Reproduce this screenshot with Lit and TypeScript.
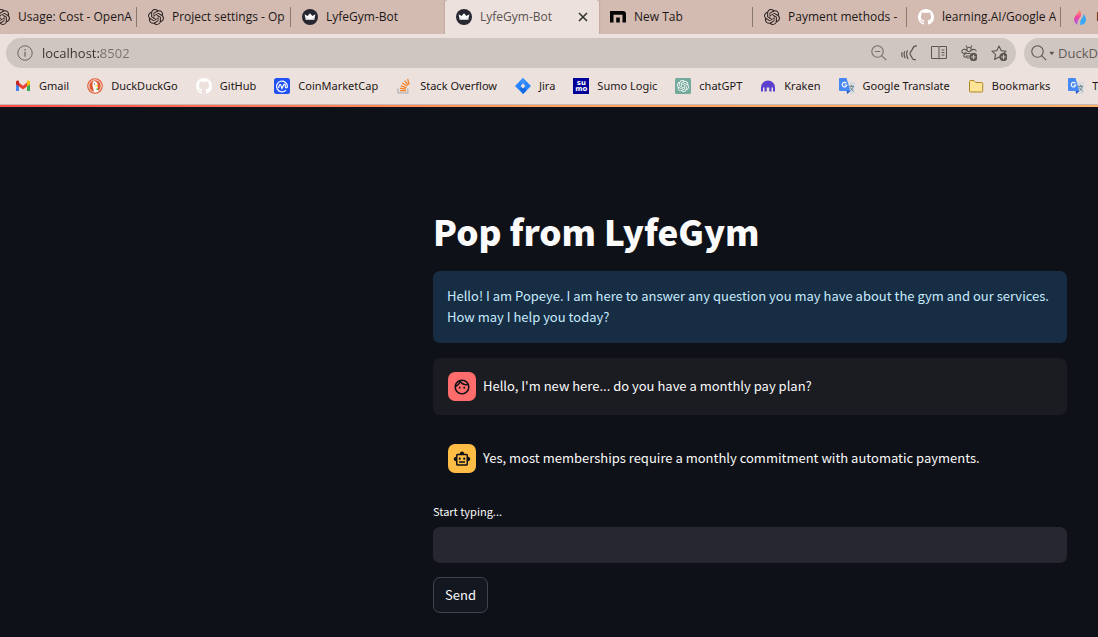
import { LitElement, html, svg, css } from "lit";
import { customElement, property, state } from "lit/decorators.js";

const OPENAI =
  "M22.2819 9.8211a5.9847 5.9847 0 0 0-.5157-4.9108 6.0462 6.0462 0 0 0-6.5098-2.9A6.0651 6.0651 0 0 0 4.9807 4.1818a5.9847 5.9847 0 0 0-3.9977 2.9 6.0462 6.0462 0 0 0 .7427 7.0966 5.98 5.98 0 0 0 .511 4.9107 6.051 6.051 0 0 0 6.5146 2.9001A5.9847 5.9847 0 0 0 13.2599 24a6.0557 6.0557 0 0 0 5.7718-4.2058 5.9894 5.9894 0 0 0 3.9977-2.9001 6.0557 6.0557 0 0 0-.7475-7.0729zm-9.022 12.6081a4.4755 4.4755 0 0 1-2.8764-1.0408l.1419-.0804 4.7783-2.7582a.7948.7948 0 0 0 .3927-.6813v-6.7369l2.02 1.1686a.071.071 0 0 1 .038.052v5.5826a4.504 4.504 0 0 1-4.4945 4.4944zm-9.6607-4.1254a4.4708 4.4708 0 0 1-.5346-3.0137l.142.0852 4.783 2.7582a.7712.7712 0 0 0 .7806 0l5.8428-3.3685v2.3324a.0804.0804 0 0 1-.0332.0615L9.74 19.9502a4.4992 4.4992 0 0 1-6.1408-1.6464zM2.3408 7.8956a4.485 4.485 0 0 1 2.3655-1.9728V11.6a.7664.7664 0 0 0 .3879.6765l5.8144 3.3543-2.0201 1.1685a.0757.0757 0 0 1-.071 0l-4.8303-2.7865A4.504 4.504 0 0 1 2.3408 7.872zm16.5963 3.8558L13.1038 8.364 15.1192 7.2a.0757.0757 0 0 1 .071 0l4.8303 2.7913a4.4944 4.4944 0 0 1-.6765 8.1042v-5.6772a.79.79 0 0 0-.407-.667zm2.0107-3.0231l-.142-.0852-4.7735-2.7818a.7759.7759 0 0 0-.7854 0L9.409 9.2297V6.8974a.0662.0662 0 0 1 .0284-.0615l4.8303-2.7866a4.4992 4.4992 0 0 1 6.6802 4.66zM8.3065 12.863l-2.02-1.1638a.0804.0804 0 0 1-.038-.0567V6.0742a4.4992 4.4992 0 0 1 7.3757-3.4537l-.142.0805L8.704 5.459a.7948.7948 0 0 0-.3927.6813zm1.0976-2.3654l2.602-1.4998 2.6069 1.4998v2.9994l-2.5974 1.4997-2.6067-1.4997Z";
const OCTOCAT =
  "M8 0C3.58 0 0 3.58 0 8c0 3.54 2.29 6.53 5.47 7.59.4.07.55-.17.55-.38 0-.19-.01-.82-.01-1.49-2.01.37-2.53-.49-2.69-.94-.09-.23-.48-.94-.82-1.13-.28-.15-.68-.52-.01-.53.63-.01 1.08.58 1.23.82.72 1.21 1.87.87 2.33.66.07-.52.28-.87.51-1.07-1.78-.2-3.64-.89-3.64-3.95 0-.87.31-1.59.82-2.15-.08-.2-.36-1.02.08-2.12 0 0 .67-.21 2.2.82.64-.18 1.32-.27 2-.27s1.36.09 2 .27c1.53-1.04 2.2-.82 2.2-.82.44 1.1.16 1.92.08 2.12.51.56.82 1.27.82 2.15 0 3.07-1.87 3.75-3.65 3.95.29.25.54.73.54 1.48 0 1.07-.01 1.93-.01 2.2 0 .21.15.46.55.38A8.01 8.01 0 0 0 16 8c0-4.42-3.58-8-8-8z";
const FACE =
  "M10.25 13c0 .69-.56 1.25-1.25 1.25S7.75 13.69 7.75 13s.56-1.25 1.25-1.25 1.25.56 1.25 1.25zM15 11.75c-.69 0-1.25.56-1.25 1.25s.56 1.25 1.25 1.25 1.25-.56 1.25-1.25-.56-1.25-1.25-1.25zm7 .25c0 5.52-4.48 10-10 10S2 17.52 2 12 6.48 2 12 2s10 4.48 10 10zM10.66 4.12C12.06 6.44 14.6 8 17.5 8c.46 0 .91-.05 1.34-.12C17.44 5.56 14.9 4 12 4c-.46 0-.91.05-1.34.12zM4.42 9.47c1.71-.97 3.03-2.55 3.66-4.44C6.37 6 5.05 7.58 4.42 9.47zM20 12c0-.78-.12-1.53-.33-2.24-.7.15-1.42.24-2.17.24-3.13 0-5.92-1.44-7.76-3.69C8.69 8.87 6.6 10.88 4 11.86c.01.04 0 .09 0 .14 0 4.42 3.58 8 8 8s8-3.58 8-8z";
const ROBOT =
  "M20 9V7c0-1.1-.9-2-2-2h-3c0-1.66-1.34-3-3-3S9 3.34 9 5H6c-1.1 0-2 .9-2 2v2c-1.66 0-3 1.34-3 3s1.34 3 3 3v4c0 1.1.9 2 2 2h12c1.1 0 2-.9 2-2v-4c1.66 0 3-1.34 3-3s-1.34-3-3-3zm-2 10H6V7h12v12zm-9-6c-.83 0-1.5-.67-1.5-1.5S8.17 10 9 10s1.5.67 1.5 1.5S9.83 13 9 13zm7.5-1.5c0 .83-.67 1.5-1.5 1.5s-1.5-.67-1.5-1.5.67-1.5 1.5-1.5 1.5.67 1.5 1.5zM8 15h8v2H8v-2z";

const plusBadge = svg`<circle cx="12.5" cy="12" r="4.2" fill="#5b5653"/><path d="M12.5 9.8v4.4M10.3 12h4.4" stroke="#d0c6c1" stroke-width="1.1"/>`;

// Glyph bodies, all drawn on a 16 × 16 canvas.
const glyphs: Record<string, unknown> = {
  openai: svg`<path transform="scale(.6667)" fill="#2b2322" d=${OPENAI}/>`,
  github: svg`<path fill="#fff" d=${OCTOCAT}/>`,
  crown: svg`<circle cx="8" cy="8" r="8" fill="#262730"/><path d="M2.6 5.2 5.6 7 8 4.2 10.4 7l3-1.8-1.3 5.9H3.9z" fill="#fff"/><path d="M3.9 11.1 3.4 8.9 8 10l4.6-1.1-.5 2.2z" fill="#c9cacc"/>`,
  maxthon: svg`<path d="M0 2h13a3 3 0 0 1 3 3v8.500h-3.500V5.800H3.500v7.700H0z" fill="#050505"/><path d="M6.200 8.500h3.600v5H6.200z" fill="#050505"/>`,
  flame: svg`<defs><linearGradient id="fl" x1="0" y1="0" x2="0" y2="1"><stop offset="0" stop-color="#ffa15c"/><stop offset=".5" stop-color="#f4459c"/><stop offset="1" stop-color="#9b5cf6"/></linearGradient></defs><path d="M7 .5c.6 3.500-4.900 5.500-4.900 10 0 2.500 1.600 4.500 3.600 5.200C4.500 12 7.500 10 8.800 7 9.800 4.500 8.800 2 7 .5z" fill="url(#fl)"/><path d="M11.500 5c.2 4-4.500 5.500-3 10.900C12 16 14 13.500 14 10.500c0-2-1.200-4-2.500-5.500z" fill="#38a9f5"/>`,
  gmail: svg`<path d="M1 3.500 1 13h3V7z" fill="#4285f4"/><path d="M15 3.500V13h-3V7z" fill="#34a853"/><path d="m4 4.500 4 3.200 4-3.200v4L8 11.600 4 8.500z" fill="#ea4335"/><path d="M1 4.200C1 2.500 2.900 2 4 3v5.500L1 6.200z" fill="#c5221f"/><path d="M15 4.200c0-1.700-1.900-2.200-3-1.200v5.500l3-2.300z" fill="#fbbc04"/>`,
  duck: svg`<circle cx="8" cy="8" r="7.800" fill="#de5833"/><circle cx="8" cy="8" r="6.200" fill="none" stroke="#fff" stroke-width=".9"/><path d="M6 3.500c2.500-.8 4.600.8 4.600 3.700 0 2 .2 4.400.8 6.200-2 .9-3.500.7-4.400.4C6.500 11 5.600 8.500 5.400 6.500z" fill="#fff"/><path d="M8.200 7.200c1.500-.2 3 .1 3 .6s-1.500.9-2.900.8z" fill="#fdd20a"/><path d="m8.500 11 2.500-1v2.500z" fill="#65bc46"/><circle cx="7.400" cy="5.900" r=".6" fill="#2d4f8e"/>`,
  coin: svg`<rect width="16" height="16" rx="2.500" fill="#1f51f5"/><path d="M12 12.100A5.400 5.400 0 1 1 13.400 8.500c0 1.800-2.100 1.800-2.100 0 0-3.500-1.500-2.700-2.100-.8L8 10.400 7 7.500C6.500 5.800 5.700 6 5.300 7.500l-.8 2.600" fill="none" stroke="#fff" stroke-width="1.200"/>`,
  stack: svg`<path d="M2 10.500v4.300h9.800v-4.300" fill="none" stroke="#b3b4b8" stroke-width="1.300"/><path d="M4 12.600h6M4.100 10.400l5.900.7M4.700 7.900l5.700 1.700M6.200 5l5 3.100M8.600 2.600l3.600 4.600M11.600 1l1.600 5.500" stroke="#f48024" stroke-width="1.200"/>`,
  jira: svg`<path d="m8 0 8 8-8 8-8-8z" fill="#2684ff"/><path d="M8 0 4.500 3.500 8 8l3-3z" fill="#3b8fff"/><path d="m8 16 3.500-3.500L8 8 5 11z" fill="#1668e0"/><path d="m8 5.600 2.400 2.400L8 10.400 5.600 8z" fill="#ede1dd"/>`,
  gpt: svg`<rect width="16" height="16" rx="1.500" fill="#74aa9c"/><path transform="translate(2 2) scale(.5)" fill="#fff" d=${OPENAI}/>`,
  kraken: svg`<path d="M1 13.500V9.500a7 7 0 0 1 14 0v4h-2v-4h-1.500v4h-2.200v-4H6.700v4H4.500v-4H3v4z" fill="#5b3fce"/>`,
  translate: svg`<path d="M7 4h8a1 1 0 0 1 1 1v10a1 1 0 0 1-1 1H9z" fill="#d7dbdf"/><path d="M1 0h6.500l3.800 13H1a1 1 0 0 1-1-1V1a1 1 0 0 1 1-1z" fill="#4688f4"/><path d="M11.300 13 8.200 16 7.500 13z" fill="#2a56c6"/><path d="M7.400 5.300A2.300 2.300 0 1 0 7.800 7H5.600" fill="none" stroke="#fff" stroke-width="1.100"/><path d="M10.200 8.300h4.800M12.600 7v1.300M14.200 8.300c-.4 2-1.500 3.500-2.700 4.500M11.200 9.500c.8 1.700 2 2.800 3.500 3.600" fill="none" stroke="#607988" stroke-width=".9"/>`,
  folder: svg`<path d="M1.500 3.500a1 1 0 0 1 1-1h3.300l1.900 2h6a1 1 0 0 1 1 1V13a1 1 0 0 1-1 1H2.500a1 1 0 0 1-1-1z" fill="#ffe497" stroke="#ad8523"/>`,
  info: svg`<circle cx="8" cy="8" r="7.200" fill="none" stroke="#6b6562"/><path d="M8 6.800v5M8 4v1.400" stroke="#6b6562" stroke-width="1.200"/>`,
  zoomOut: svg`<g fill="none" stroke="#77706c" stroke-width="1.100"><circle cx="6.500" cy="6.500" r="5.700"/><path d="m10.600 10.600 4.600 4.600M3.800 6.500h5.400"/></g>`,
  cast: svg`<g fill="none" stroke="#5b5653" stroke-width="1.200"><path d="M16 1c-2.500-.3-3.800.8-4.500 3-.5 1.800-2.500 2.600-2.500 4.500s1.300 2.300 1.800 3.800c.5 1.700 1.700 2.700 4.200 2.200M6.500 5.200c-1.200 2.600-1 6 .6 8.800M3.800 6.200c-1 2-.8 4.600.4 7M1.200 7.200c-.6 1.600-.5 3.400.3 5"/></g>`,
  book: svg`<g fill="none" stroke="#5b5653"><path d="M.5 1.500h7l.5.700.500-.7h7v12h-7l-.500.700-.500-.7h-7zM8 2v12M10.500 5h3M10.500 7.500h3M10.500 10h3"/></g>`,
  bee: svg`<g fill="none" stroke="#5b5653" stroke-width="1.100"><circle cx="8" cy="4.500" r="2.200"/><path d="m6 2.500-1-2M10 2.500l1-2M6 5.500C3 3.500.8 4.500.8 6.500S3.500 9 5.500 7.500M10 5.500c3-2 5.200-1 5.200 1M5 8.500c-2 .5-2.500 2-2 3s2 1 3 0M5.500 8.500h4M5 11h3M6 13h2"/></g>${plusBadge}`,
  star: svg`<path d="m8 1 2.100 4.600 5 .6-3.700 3.400 1 5L8 12.100l-4.400 2.500 1-5L.9 6.200l5-.6z" fill="none" stroke="#5b5653" stroke-width="1.100" stroke-linejoin="round"/>${plusBadge}`,
  search: svg`<g fill="none" stroke="#5b5653" stroke-width="1.100"><circle cx="6.500" cy="6.500" r="5.700"/><path d="m10.600 10.600 4.600 4.600"/></g>`,
  caret: svg`<path d="M4 5h9l-4.500 6z" fill="#5b5653"/>`,
  close: svg`<path d="m4 4 8 8M12 4l-8 8" stroke="#333" stroke-width="1.600"/>`,
  face: svg`<path transform="scale(.6667)" fill="#0e1117" d=${FACE}/>`,
  robot: svg`<path transform="scale(.6667)" fill="#0e1117" d=${ROBOT}/>`,
};

@customElement("ui-glyph")
class UiGlyph extends LitElement {
  @property() name = "";
  @property({ type: Number }) size = 16;
  static styles = css`
    :host { display: inline-flex; flex: none; }
    .sumo {
      display: grid; align-content: center; justify-items: center;
      width: 16px; height: 16px; background: #000099; color: #fff;
      font: 700 7px/6px "DejaVu Sans", sans-serif;
    }
  `;
  render() {
    if (this.name === "sumo") {
      return html`<span class="sumo" aria-hidden="true"><span>su</span><span>mo</span></span>`;
    }
    return html`<svg width=${this.size} height=${this.size} viewBox="0 0 16 16" aria-hidden="true">${glyphs[this.name]}</svg>`;
  }
}

@customElement("browser-chrome")
class BrowserChrome extends LitElement {
  tabs = [
    ["openai", "Usage: Cost - OpenA"],
    ["openai", "Project settings - Op"],
    ["crown", "LyfeGym-Bot"],
    ["crown", "LyfeGym-Bot"],
    ["maxthon", "New Tab"],
    ["openai", "Payment methods -"],
    ["github", "learning.AI/Google A"],
    ["flame", "I"],
  ];
  active = 3;
  bookmarks = [
    ["gmail", "Gmail"],
    ["duck", "DuckDuckGo"],
    ["github", "GitHub"],
    ["coin", "CoinMarketCap"],
    ["stack", "Stack Overflow"],
    ["jira", "Jira"],
    ["sumo", "Sumo Logic"],
    ["gpt", "chatGPT"],
    ["kraken", "Kraken"],
    ["translate", "Google Translate"],
    ["folder", "Bookmarks"],
    ["translate", "Translate"],
  ];

  static styles = css`
    :host {
      display: block; overflow: hidden; background: #ede1dd; color: #1c1817;
      font: 12px/16px "Open Sans", "Noto Sans", sans-serif;
    }
    button, input { font: inherit; color: inherit; border: 0; padding: 0; margin: 0; background: none; }
    input { outline: 0; min-width: 0; }
    .tabs { display: flex; height: 34px; background: #d4bbb1; overflow: hidden; }
    .tab {
      display: flex; align-items: center; box-sizing: border-box;
      flex: 0 0 154px; min-width: 0; padding: 0 3px 0 11px; position: relative;
    }
    .tab:first-child { margin-left: -17px; }
    .pick { display: flex; align-items: center; gap: 8px; flex: 1; min-width: 0; height: 34px; }
    .name { overflow: hidden; white-space: nowrap; }
    .split::after {
      content: ""; position: absolute; right: 0; top: 7px; bottom: 7px;
      width: 1px; background: #8b7a74;
    }
    .active {
      background: #ede1dd; color: #5a5350; border-radius: 3px 3px 0 0;
      box-shadow: 0 0 2px #9b8780; padding-right: 8px;
    }
    .close { display: flex; }
    .bar { display: flex; gap: 8px; padding: 4px 0 4px 6px; }
    .field { display: flex; align-items: center; height: 30px; background: #d0c6c1; }
    .address { flex: 1; border-radius: 15px; padding: 0 9px 0 11px; gap: 9px; min-width: 0; }
    .url {
      flex: 1; font-size: 13px; color: transparent;
      background: linear-gradient(90deg, #38322f 59px, #77706c 59px);
      background-clip: text; -webkit-background-clip: text;
    }
    .tools { display: flex; gap: 14px; }
    .tools button { display: flex; }
    .search { flex: 0 0 74px; box-sizing: border-box; border-radius: 15px 0 0 15px; padding-left: 7px; overflow: hidden; }
    .engine { display: flex; align-items: center; }
    .query { width: 120px; flex: none; font-size: 13px; padding-left: 2px; }
    .query::placeholder { color: #625c59; opacity: 1; }
    .marks {
      display: flex; align-items: center; gap: 18px; height: 28px; padding: 0 0 4px 15px; overflow: hidden;
      font-family: "Noto Sans", "Open Sans", sans-serif; font-size: 11px;
    }
    .mark { display: flex; align-items: center; gap: 8px; color: inherit; text-decoration: none; white-space: nowrap; }
    .rule { height: 3px; background: linear-gradient(90deg, #ff4b4b, #ffa05c 50%, #ffb168); border-top: 1px solid #c9bcb8; box-sizing: border-box; }
  `;

  render() {
    return html`
      <div class="tabs">
        ${this.tabs.map(([icon, name], i) => {
          const on = i === this.active;
          const split = !on && i !== this.active - 1 && i < 7;
          return html`<div class="tab ${on ? "active" : ""} ${split ? "split" : ""}">
            <button class="pick"><ui-glyph name=${icon}></ui-glyph><span class="name">${name}</span></button>
            ${on ? html`<button class="close" aria-label="Close tab"><ui-glyph name="close"></ui-glyph></button>` : ""}
          </div>`;
        })}
      </div>
      <div class="bar">
        <div class="field address">
          <ui-glyph name="info"></ui-glyph>
          <input class="url" aria-label="Address" .value=${"localhost:8502"} spellcheck="false" />
          <div class="tools">
            ${[["zoomOut", "Zoom out"], ["cast", "Sniffer"], ["book", "Reader"], ["bee", "Add extension"], ["star", "Add bookmark"]].map(
              ([icon, label]) => html`<button aria-label=${label}><ui-glyph name=${icon}></ui-glyph></button>`,
            )}
          </div>
        </div>
        <div class="field search">
          <button class="engine" aria-label="Search engine">
            <ui-glyph name="search"></ui-glyph><ui-glyph name="caret" size="9"></ui-glyph>
          </button>
          <input class="query" aria-label="Search" placeholder="DuckDuckGo" />
        </div>
      </div>
      <nav class="marks">
        ${this.bookmarks.map(
          ([icon, name]) => html`<a class="mark" href="#"><ui-glyph name=${icon}></ui-glyph>${name}</a>`,
        )}
      </nav>
      <div class="rule"></div>
    `;
  }
}

@customElement("chat-message")
class ChatMessage extends LitElement {
  @property() from: "user" | "bot" = "user";
  static styles = css`
    .row { display: flex; align-items: center; gap: 7px; box-sizing: border-box; min-height: 57px; padding: 14px 15px; border-radius: 7px; }
    .row.user { background: #1a1c22; }
    .avatar { display: grid; place-items: center; flex: none; width: 28px; height: 29px; border-radius: 7px; }
    .user .avatar { background: #ff6c6c; }
    .bot .avatar { background: #ffbd45; }
    .text { margin: 0; padding-bottom: 2px; }
  `;
  render() {
    return html`<div class="row ${this.from}">
      <span class="avatar"><ui-glyph name=${this.from === "user" ? "face" : "robot"} size="18"></ui-glyph></span>
      <p class="text"><slot></slot></p>
    </div>`;
  }
}

@customElement("app-root")
class AppRoot extends LitElement {
  @state() draft = "";
  static styles = css`
    :host {
      display: flex; flex-direction: column; min-height: 100vh; background: #0e1117; color: #fafafa;
      font: 13px/21px "Noto Sans CJK SC", "Noto Sans", sans-serif;
    }
    .page { flex: 1; padding: 100px 31px 24px; }
    .column { display: flex; flex-direction: column; gap: 15px; max-width: 634px; margin-left: auto; }
    .title { margin: 0; padding-bottom: 2px; font-size: 35px; line-height: 47px; font-weight: 900; }
    .notice { margin: 0; padding: 14px 14px 16px; border-radius: 7px; background: #172d43; color: #c7ebff; }
    .form { display: flex; flex-direction: column; align-items: flex-start; }
    .label { font-size: 11px; line-height: 18px; margin-bottom: 7px; }
    .box {
      width: 100%; height: 36px; box-sizing: border-box; border: 0; outline: 0; border-radius: 7px;
      background: #262730; color: inherit; font: inherit; padding: 0 11px; margin-bottom: 14px;
    }
    .send {
      height: 36px; padding: 0 11px 2px; border: 1px solid #41444c; border-radius: 7px;
      background: #131720; color: inherit; font: inherit;
    }
  `;
  render() {
    return html`
      <browser-chrome></browser-chrome>
      <main class="page">
        <div class="column">
          <h1 class="title">Pop from LyfeGym</h1>
          <p class="notice">
            Hello! I am Popeye. I am here to answer any question you may have about the gym and our services.
            How may I help you today?
          </p>
          <chat-message from="user">Hello, I'm new here... do you have a monthly pay plan?</chat-message>
          <chat-message from="bot">Yes, most memberships require a monthly commitment with automatic payments.</chat-message>
          <form class="form" @submit=${(e: Event) => e.preventDefault()}>
            <label class="label" for="draft">Start typing...</label>
            <input id="draft" class="box" .value=${this.draft} @input=${(e: Event) => (this.draft = (e.target as HTMLInputElement).value)} />
            <button class="send">Send</button>
          </form>
        </div>
      </main>
    `;
  }
}
